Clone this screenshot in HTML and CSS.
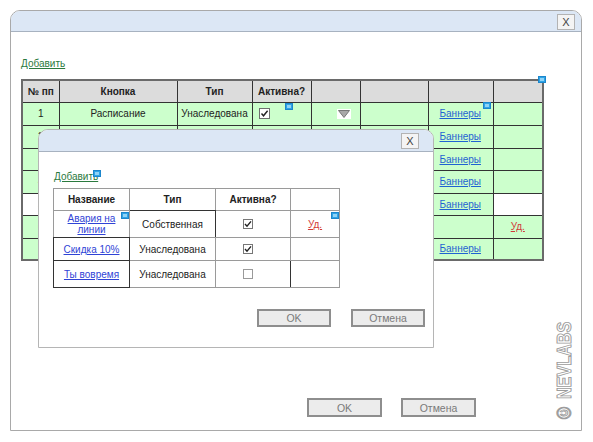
FILE: index.html
```html
<!DOCTYPE html>
<html lang="ru">
<head>
<meta charset="utf-8">
<title>Кнопки</title>
<link rel="stylesheet" href="styles.css">
</head>
<body>
<div class="win">
  <div class="tbar"><span class="xbtn">X</span></div>
  <div class="content">
    <a class="add">Добавить</a>
    <table class="main">
      <colgroup><col style="width:37px"><col style="width:118px"><col style="width:75px"><col style="width:59px"><col style="width:49px"><col style="width:68px"><col style="width:65px"><col style="width:50px"></colgroup>
      <tr class="hd r22"><th>№ пп</th><th>Кнопка</th><th>Тип</th><th>Активна?</th><th></th><th></th><th></th><th></th></tr>
      <tr class="g r23"><td>1</td><td>Расписание</td><td>Унаследована</td>
        <td class="chk"><svg width="11" height="11" viewBox="0 0 11 11"><rect x="0.5" y="0.5" width="10" height="10" fill="#fff" stroke="#6f6f6f"/><path d="M2.5 5.5 L4.5 7.8 L8.6 2.8" fill="none" stroke="#222" stroke-width="1.4"/></svg></td>
        <td class="tri"><svg width="14" height="10" viewBox="0 0 14 10"><rect width="14" height="10" fill="#fff"/><path d="M1.5 1.5 H12.5 L7 8.5 Z" fill="#a8a8a8" stroke="#777" stroke-width="1"/></svg></td>
        <td></td><td class="ban"><a class="blink">Баннеры</a></td><td></td></tr>
      <tr class="g r23"><td>2</td><td></td><td></td><td></td><td></td><td></td><td class="ban"><a class="blink">Баннеры</a></td><td></td></tr>
      <tr class="g r22"><td>3</td><td></td><td></td><td></td><td></td><td></td><td class="ban"><a class="blink">Баннеры</a></td><td></td></tr>
      <tr class="g r23"><td>4</td><td></td><td></td><td></td><td></td><td></td><td class="ban"><a class="blink">Баннеры</a></td><td></td></tr>
      <tr class="w r22"><td>5</td><td></td><td></td><td></td><td></td><td></td><td class="ban gc"><a class="blink">Баннеры</a></td><td></td></tr>
      <tr class="g r23"><td>6</td><td></td><td></td><td></td><td></td><td></td><td class="ban"></td><td><a class="rlink">Уд.</a></td></tr>
      <tr class="g r22"><td>7</td><td></td><td></td><td></td><td></td><td></td><td class="ban"><a class="blink">Баннеры</a></td><td></td></tr>
    </table>
    <div class="btns"><span class="btn">OK</span><span class="btn">Отмена</span></div>
  </div>
  <span class="mk m1"></span>
  <span class="mk m2"></span>
  <span class="mk m3"></span>

  <div class="dlg">
    <div class="tbar dtbar"><span class="xbtn">X</span></div>
    <div class="dcontent">
      <a class="add dadd">Добавить</a>
      <table class="inner">
        <colgroup><col style="width:76px"><col style="width:86px"><col style="width:75px"><col style="width:49px"></colgroup>
        <tr class="ih"><th>Название</th><th class="bb">Тип</th><th>Активна?</th><th></th></tr>
        <tr class="i1"><td class="bb"><a class="ilink">Авария на<br>линии</a></td><td class="tl rr">Собственная</td><td class="cb"><svg width="10" height="10" viewBox="0 0 10 10"><rect x="0.5" y="0.5" width="9" height="9" fill="#fff" stroke="#777"/><path d="M2 5 L4 7.2 L8 2.4" fill="none" stroke="#222" stroke-width="1.4"/></svg></td><td><a class="rlink">Уд.</a></td></tr>
        <tr class="i2"><td class="ll tl rr bb"><a class="ilink">Скидка 10%</a></td><td>Унаследована</td><td class="cb"><svg width="10" height="10" viewBox="0 0 10 10"><rect x="0.5" y="0.5" width="9" height="9" fill="#fff" stroke="#777"/><path d="M2 5 L4 7.2 L8 2.4" fill="none" stroke="#222" stroke-width="1.4"/></svg></td><td></td></tr>
        <tr class="i3"><td class="ll tl rr bb"><a class="ilink">Ты вовремя</a></td><td>Унаследована</td><td class="cb rr"><svg width="10" height="10" viewBox="0 0 10 10"><rect x="0.5" y="0.5" width="9" height="9" fill="#fff" stroke="#9a9a9a"/></svg></td><td class="ll"></td></tr>
      </table>
      <div class="dbtns"><span class="btn dbtn">OK</span><span class="btn dbtn">Отмена</span></div>
    </div>
    <span class="mk d1"></span>
    <span class="mk d2"></span>
    <span class="mk d3"></span>
  </div>

  <div class="mark">© NEVLABS</div>
</div>
</body>
</html>
```
FILE: styles.css
```css
body {
  margin: 0;
  background: #fff;
  font-family: "Liberation Sans", Arial, sans-serif;
  font-size: 10px;
  color: #222;
}
.win {
  position: relative;
  margin: 10px 0 0 10px;
  width: 570px;
  height: 419px;
  border: 1px solid #a9a9a9;
  border-radius: 10px 10px 0 0;
}
.tbar {
  height: 21px;
  box-sizing: border-box;
  background: #dce7f5;
  border-bottom: 1px solid #a7b2c0;
  border-radius: 9px 9px 0 0;
  display: flex;
  justify-content: flex-end;
  align-items: flex-start;
  padding: 3px 6px 0 0;
}
.xbtn {
  width: 18px;
  height: 16px;
  box-sizing: border-box;
  border: 1px solid #b3b3b3;
  background: #f4f4f4;
  color: #444;
  font-size: 11px;
  line-height: 14px;
  text-align: center;
}
.content {
  padding: 26px 0 0 10px;
}
.add {
  display: block;
  width: max-content;
  line-height: 12px;
  color: #2b7a3e;
  text-decoration: underline;
}
.main {
  margin-top: 9px;
  width: 521px;
  table-layout: fixed;
  border-collapse: collapse;
  border: 2px solid #6a6a6a;
}
.main th, .main td {
  border: 1px solid #333;
  padding: 0;
  text-align: center;
  vertical-align: middle;
  white-space: nowrap;
  overflow: hidden;
}
.main th { font-weight: bold; }
.hd { background: #dcdcdc; }
.r22 { height: 22px; }
.r23 { height: 23px; }
.g { background: #ccffcc; }
.w { background: #fff; }
.gc { background: #ccffcc; }
.main td.chk { text-align: left; padding-left: 6px; }
.main td.tri { text-align: left; padding-left: 25px; }
.main td.ban { text-align: left; padding-left: 11px; }
.chk svg, .tri svg, .cb svg { display: block; }
.blink { color: #1f63d2; text-decoration: underline; }
.rlink { color: #d23a3a; text-decoration: underline; }
.ilink { color: #2f43d6; text-decoration: underline; }
.btns {
  display: flex;
  gap: 19px;
  margin: 137px 0 0 286px;
}
.btn {
  width: 75px;
  height: 19px;
  box-sizing: border-box;
  border: 2px solid #8e8e8e;
  background: #ececec;
  color: #7a7a7a;
  font-size: 10.5px;
  display: flex;
  align-items: center;
  justify-content: center;
}
.mk {
  position: absolute;
  width: 8px;
  height: 7px;
  box-sizing: border-box;
  background: #8fd3f7;
  border: 1px solid #1c86cc;
  box-shadow: inset 0 0 0 1px #2ea4e6;
}
.m1 { left: 527px; top: 65px; }
.m2 { left: 274px; top: 92px; }
.m3 { left: 472px; top: 91px; }
.dlg {
  position: absolute;
  left: 27px;
  top: 118px;
  width: 394px;
  height: 217px;
  border: 1px solid #b5b5b5;
  border-radius: 10px 10px 0 0;
  background: #fff;
}
.dtbar {
  height: 22px;
  padding: 3px 14px 0 0;
}
.dcontent {
  padding: 19px 8px 0 14px;
}
.dadd { margin-left: 1px; }
.inner {
  margin-top: 5px;
  width: 286px;
  table-layout: fixed;
  border-collapse: collapse;
  border: 1px solid #9a9a9a;
}
.inner th, .inner td {
  border: 1px solid #9a9a9a;
  padding: 0;
  text-align: center;
  vertical-align: middle;
  white-space: nowrap;
}
.inner th { font-weight: bold; }
.ih { height: 22px; }
.i1 { height: 27px; }
.i2 { height: 23px; }
.i3 { height: 27px; }
.inner td.cb { padding-right: 10px; }
.inner td.cb svg { margin: 0 auto; }
.inner .tl { border-top-color: #333; }
.inner .ll { border-left-color: #333; }
.inner .rr { border-right-color: #333; }
.inner .bb { border-bottom-color: #333; }
.dbtns {
  display: flex;
  justify-content: flex-end;
  gap: 20px;
  margin-top: 21px;
}
.dbtn { width: 74px; height: 18px; }
.d1 { left: 54px; top: 40px; }
.d2 { left: 82px; top: 82px; }
.d3 { left: 292px; top: 82px; }
.mark {
  position: absolute;
  left: 543px;
  top: 299px;
  writing-mode: vertical-rl;
  transform: rotate(180deg) scale(1, 0.81);
  font-size: 20px;
  line-height: 20px;
  font-weight: bold;
  color: #fff;
  -webkit-text-stroke: 1px #9c9c9c;
  white-space: nowrap;
}
```
